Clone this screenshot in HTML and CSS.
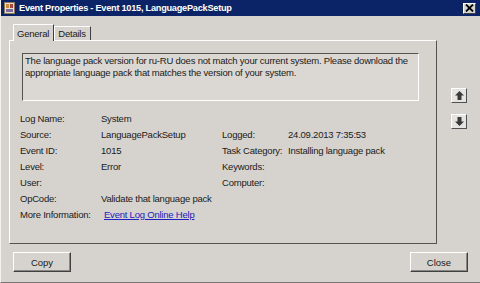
FILE: index.html
```html
<!DOCTYPE html>
<html lang="en">
<head>
    <meta charset="UTF-8">
    <title>Event Properties</title>
    <link rel="stylesheet" href="styles.css">
</head>
<body>
    <div class="window">
        <div class="titlebar">
            <svg class="app-icon" width="11" height="12" viewBox="0 0 11 12">
                <rect x="0.5" y="0.5" width="10" height="11" fill="#e8e0c8" stroke="#8a7a5a"/>
                <rect x="2" y="2" width="3" height="4" fill="#d08a30"/>
                <rect x="6" y="2" width="3" height="4" fill="#b04040"/>
                <rect x="2" y="7" width="7" height="3" fill="#7a6aa0"/>
            </svg>
            <span class="title">Event Properties - Event 1015, LanguagePackSetup</span>
            <button class="close-x">
                <svg width="9" height="8" viewBox="0 0 9 8"><path d="M1 0.5 L8 7.5 M8 0.5 L1 7.5" stroke="#000" stroke-width="1.8"/></svg>
            </button>
        </div>
        <div class="content">
            <div class="tabs">
                <div class="tab active">General</div>
                <div class="tab">Details</div>
            </div>
            <div class="main-row">
                <div class="panel">
                    <div class="message">The language pack version for ru-RU does not match your current system. Please download the appropriate language pack that matches the version of your system.</div>
                    <div class="props">
                        <span>Log Name:</span><span>System</span><span></span><span></span>
                        <span>Source:</span><span>LanguagePackSetup</span><span>Logged:</span><span>24.09.2013 7:35:53</span>
                        <span>Event ID:</span><span>1015</span><span>Task Category:</span><span>Installing language pack</span>
                        <span>Level:</span><span>Error</span><span>Keywords:</span><span></span>
                        <span>User:</span><span></span><span>Computer:</span><span></span>
                        <span>OpCode:</span><span>Validate that language pack</span><span></span><span></span>
                        <span>More Information:</span><span class="wide"><a href="#">Event Log Online Help</a></span>
                    </div>
                </div>
                <div class="side">
                    <button class="nav-btn">
                        <svg width="9" height="9" viewBox="0 0 9 9"><path d="M4.5 0 L9 4.5 L6.5 4.5 L6.5 9 L2.5 9 L2.5 4.5 L0 4.5 Z" fill="#3a3a3a"/></svg>
                    </button>
                    <button class="nav-btn">
                        <svg width="9" height="9" viewBox="0 0 9 9"><path d="M4.5 9 L9 4.5 L6.5 4.5 L6.5 0 L2.5 0 L2.5 4.5 L0 4.5 Z" fill="#3a3a3a"/></svg>
                    </button>
                </div>
            </div>
            <div class="footer">
                <button class="btn">Copy</button>
                <button class="btn">Close</button>
            </div>
        </div>
    </div>
</body>
</html>
```
FILE: styles.css
```css
*, *:before, *:after {
    box-sizing: border-box;
}
body {
    margin: 0;
    background: #d6d3ce;
    font-family: "Liberation Sans", Arial, sans-serif;
    font-size: 9.5px;
    color: #1a1a1a;
}
.window {
    width: 480px;
    height: 283px;
    border-left: 1px solid #f4f2ee;
    border-bottom: 1px solid #7a7874;
    display: flex;
    flex-direction: column;
}
.titlebar {
    height: 16px;
    background: #0b2468;
    display: flex;
    align-items: center;
    padding: 0 3px 0 3px;
}
.app-icon {
    margin-right: 4px;
}
.title {
    color: white;
    font-weight: bold;
    font-size: 9.2px;
    letter-spacing: -0.25px;
    flex: 1;
}
.close-x {
    width: 13px;
    height: 11px;
    padding: 0;
    background: #d6d3ce;
    border: 1px solid;
    border-color: #ffffff #404040 #404040 #ffffff;
    display: flex;
    align-items: center;
    justify-content: center;
    margin-right: 1px;
}
.content {
    flex: 1;
    padding: 7px 12px 0 8px;
    display: flex;
    flex-direction: column;
    letter-spacing: -0.22px;
}
.tabs {
    display: flex;
    height: 17px;
    align-items: flex-end;
    padding-left: 4px;
}
.tab {
    height: 14px;
    padding: 1px 4px 0 3px;
    border: 1px solid;
    border-color: #ffffff #404040 transparent #ffffff;
    border-bottom: none;
}
.tab.active {
    height: 17px;
    padding: 3px 4px 0 3px;
    background: #d6d3ce;
    margin-bottom: -1px;
    position: relative;
    z-index: 1;
}
.main-row {
    display: flex;
    align-items: flex-start;
}
.panel {
    width: 428px;
    height: 204px;
    border: 1px solid;
    border-color: #ffffff #555350 #555350 #ffffff;
    padding: 12px 0 0 10px;
}
.message {
    width: 397px;
    height: 48px;
    margin-left: 2px;
    border: 1px solid;
    border-color: #555350 #ffffff #ffffff #555350;
    padding: 1px 2px;
    line-height: 12px;
    background: #dbd8d3;
}
.props {
    display: grid;
    grid-template-columns: 81px 121px 66px auto;
    grid-auto-rows: 16px;
    align-items: center;
    margin-top: 9px;
}
.props .wide {
    grid-column: span 3;
    padding-left: 3px;
}
.props a {
    color: #2020c0;
}
.side {
    display: flex;
    flex-direction: column;
    gap: 11px;
    margin: 48px 0 0 14px;
}
.nav-btn {
    width: 16px;
    height: 15px;
    padding: 0;
    background: #e6e4e0;
    border: 1px solid;
    border-color: #ffffff #505050 #505050 #ffffff;
    display: flex;
    align-items: center;
    justify-content: center;
}
.footer {
    display: flex;
    justify-content: space-between;
    margin-top: 8px;
    padding-left: 4px;
}
.btn {
    width: 58px;
    height: 20px;
    font-family: "Liberation Sans", Arial, sans-serif;
    font-size: 9.5px;
    color: #1a1a1a;
    background: #d6d3ce;
    border: 1px solid;
    border-color: #ffffff #404040 #404040 #ffffff;
    box-shadow: inset -1px -1px 0 #8a8884;
    padding: 0;
}
```
